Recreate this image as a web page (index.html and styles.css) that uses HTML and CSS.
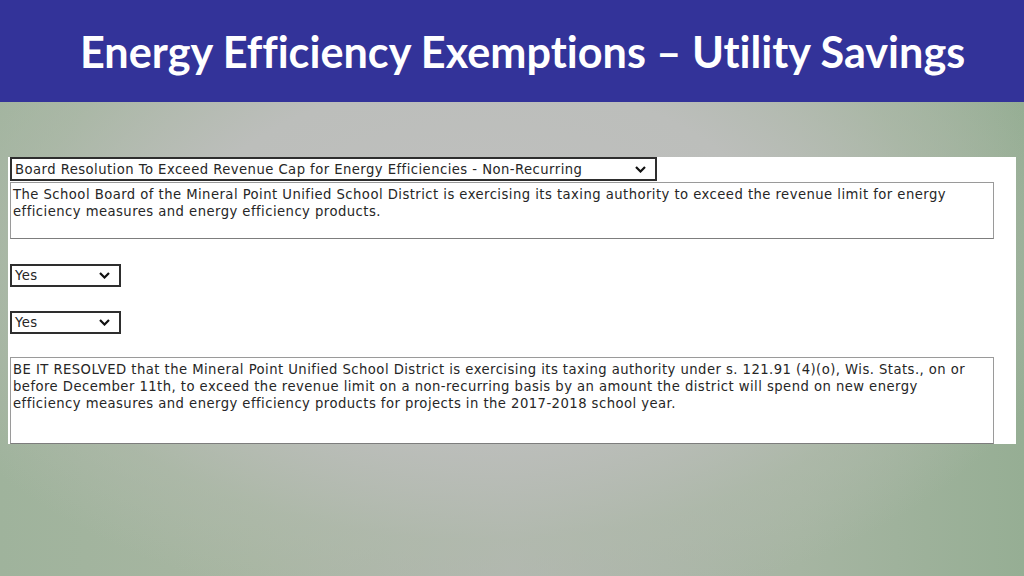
FILE: index.html
```html
<!DOCTYPE html>
<html>
<head>
<meta charset="utf-8">
<link rel="stylesheet" href="styles.css">
</head>
<body>
<header class="banner">
  <h1 class="title">Energy Efficiency Exemptions – Utility Savings</h1>
</header>
<main class="stage">
  <section class="panel">
    <div class="select select-wide">
      <span class="select-text">Board Resolution To Exceed Revenue Cap for Energy Efficiencies - Non-Recurring</span>
      <svg class="chev" width="11" height="7" viewBox="0 0 11 7"><path d="M1 1 L5.5 5.5 L10 1" fill="none" stroke="#111" stroke-width="2.2"/></svg>
    </div>
    <div class="textbox textbox-short">The School Board of the Mineral Point Unified School District is exercising its taxing authority to exceed the revenue limit for energy efficiency measures and energy efficiency products.</div>
    <div class="select select-small first-yes">
      <span class="select-text">Yes</span>
      <svg class="chev" width="11" height="7" viewBox="0 0 11 7"><path d="M1 1 L5.5 5.5 L10 1" fill="none" stroke="#111" stroke-width="2.2"/></svg>
    </div>
    <div class="select select-small second-yes">
      <span class="select-text">Yes</span>
      <svg class="chev" width="11" height="7" viewBox="0 0 11 7"><path d="M1 1 L5.5 5.5 L10 1" fill="none" stroke="#111" stroke-width="2.2"/></svg>
    </div>
    <div class="textbox textbox-tall">BE IT RESOLVED that the Mineral Point Unified School District is exercising its taxing authority under s. 121.91 (4)(o), Wis. Stats., on or before December 11th, to exceed the revenue limit on a non-recurring basis by an amount the district will spend on new energy efficiency measures and energy efficiency products for projects in the 2017-2018 school year.</div>
  </section>
</main>
</body>
</html>
```

FILE: styles.css
```css
html, body {
  margin: 0;
  padding: 0;
}
body {
  width: 1024px;
  height: 576px;
  overflow: hidden;
  background:
    radial-gradient(ellipse 600px 360px at 480px 260px, #c0c0bf 0%, #bcbebb 50%, rgba(176,186,172,0.6) 78%, rgba(160,178,156,0) 100%),
    linear-gradient(90deg, #9fb39c 0%, #a8b6a2 25%, #b3b7b1 50%, #a6b5a2 78%, #96ae94 100%);
  font-family: "DejaVu Sans", Verdana, sans-serif;
}
.banner {
  height: 102px;
  background: #333399;
  box-sizing: border-box;
  padding: 26px 0 0 80px;
}
.title {
  margin: 0;
  font-family: Lato, "Open Sans", sans-serif;
  font-weight: 700;
  font-size: 43.2px;
  line-height: 51px;
  color: #ffffff;
  font-variant-ligatures: none;
  font-feature-settings: "liga" 0, "clig" 0;
}
.stage {
  padding: 55px 8px 0 8px;
}
.panel {
  background: #ffffff;
  height: 287px;
  padding-left: 2px;
  display: flex;
  flex-direction: column;
  align-items: flex-start;
}
.select {
  box-sizing: border-box;
  border: 2px solid #2e2e2e;
  display: flex;
  align-items: center;
  justify-content: space-between;
  padding: 0 9px 0 3px;
  color: #262626;
  font-size: 13.2px;
  letter-spacing: 0.45px;
  background: #fff;
}
.select-wide {
  width: 647px;
  height: 24px;
}
.select-small {
  width: 111px;
  height: 23px;
}
.first-yes { margin-top: 25px; }
.second-yes { margin-top: 24px; }
.chev { display: block; flex: none; }
.textbox {
  box-sizing: border-box;
  width: 984px;
  border: 1px solid #9a9a9a;
  border-bottom-color: #7d7d7d;
  padding: 3px 3px 0 2px;
  font-size: 13.2px;
  letter-spacing: 0.45px;
  line-height: 17px;
  color: #262626;
  margin-top: 1px;
}
.textbox-short { height: 57px; }
.textbox-tall { height: 87px; margin-top: 23px; }
```
